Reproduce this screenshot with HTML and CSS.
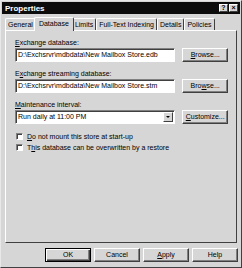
FILE: index.html
```html
<!DOCTYPE html>
<html lang="en">
<head>
  <meta charset="UTF-8">
  <title>Properties</title>
  <link rel="stylesheet" href="styles.css">
</head>
<body>
  <div class="window">
    <div class="titlebar">
      <span class="title">Properties</span>
      <span class="caption-btn">?</span>
      <span class="caption-btn">&#215;</span>
    </div>

    <div class="tabs">
      <span class="tab">General</span>
      <span class="tab active">Database</span>
      <span class="tab">Limits</span>
      <span class="tab">Full-Text Indexing</span>
      <span class="tab">Details</span>
      <span class="tab">Policies</span>
    </div>

    <div class="panel">
      <div class="field">
        <label><u>E</u>xchange database:</label>
        <div class="row">
          <div class="textbox">D:\Exchsrvr\mdbdata\New Mailbox Store.edb</div>
          <span class="btn"><u>B</u>rowse...</span>
        </div>
      </div>

      <div class="field">
        <label>E<u>x</u>change streaming database:</label>
        <div class="row">
          <div class="textbox">D:\Exchsrvr\mdbdata\New Mailbox Store.stm</div>
          <span class="btn">Bro<u>w</u>se...</span>
        </div>
      </div>

      <div class="field">
        <label><u>M</u>aintenance interval:</label>
        <div class="row">
          <div class="textbox combo">
            <span>Run daily at 11:00 PM</span>
            <span class="arrow"></span>
          </div>
          <span class="btn"><u>C</u>ustomize...</span>
        </div>
      </div>

      <div class="checks">
        <div class="check"><span class="box"></span><span><u>D</u>o not mount this store at start-up</span></div>
        <div class="check"><span class="box"></span><span>T<u>h</u>is database can be overwritten by a restore</span></div>
      </div>
    </div>

    <div class="footer">
      <span class="btn default">OK</span>
      <span class="btn">Cancel</span>
      <span class="btn"><u>A</u>pply</span>
      <span class="btn">Help</span>
    </div>
  </div>
</body>
</html>
```

FILE: styles.css
```css
body {
  margin: 0;
  font-family: "Liberation Sans", Arial, sans-serif;
  font-size: 7px;
  color: #000;
}

.window {
  width: 242px;
  height: 268px;
  box-sizing: border-box;
  background-color: #d6d6d6;
  border: 1px solid;
  border-color: #e8e8e8 #404040 #404040 #e8e8e8;
}

.titlebar {
  height: 12px;
  margin: 1px 1px 0;
  padding: 0 2px 0 3px;
  background-color: #0c0c0c;
  display: flex;
  align-items: center;
  gap: 1px;
}

.title {
  flex: 1;
  color: #fff;
  font-weight: bold;
  font-size: 8px;
}

.caption-btn {
  width: 9px;
  height: 8px;
  box-sizing: border-box;
  background-color: #d6d6d6;
  border: 1px solid;
  border-color: #fff #404040 #404040 #fff;
  font-size: 7px;
  font-weight: bold;
  line-height: 6px;
  text-align: center;
}

.tabs {
  display: flex;
  align-items: flex-end;
  height: 14px;
  margin-top: 2px;
  padding-left: 4px;
}

.tab {
  height: 11px;
  padding: 0 2px;
  line-height: 11px;
  border: 1px solid;
  border-bottom: none;
  border-color: #fff #404040 #404040 #fff;
  border-radius: 2px 2px 0 0;
  white-space: nowrap;
}

.tab.active {
  height: 13px;
  line-height: 12px;
  margin: 0 -2px -1px;
  padding: 0 4px;
  position: relative;
  background-color: #d6d6d6;
  z-index: 1;
}

.panel {
  height: 213px;
  margin: 0 4px;
  box-sizing: border-box;
  padding: 7px 8px 0 9px;
  border: 1px solid;
  border-color: #fff #404040 #404040 #fff;
}

.field {
  margin-bottom: 7px;
}

.field label {
  display: block;
  height: 9px;
  line-height: 9px;
  margin-bottom: 1px;
}

.row {
  display: flex;
  align-items: center;
  gap: 7px;
}

.textbox {
  width: 162px;
  height: 14px;
  box-sizing: border-box;
  padding: 0 2px;
  line-height: 12px;
  background-color: #fff;
  border: 1px solid;
  border-color: #808080 #fff #fff #808080;
  box-shadow: inset 1px 1px 0 #404040;
  white-space: nowrap;
  overflow: hidden;
}

.combo {
  display: flex;
  justify-content: space-between;
  align-items: center;
  padding-right: 1px;
}

.arrow {
  width: 10px;
  height: 10px;
  box-sizing: border-box;
  background-color: #d6d6d6;
  border: 1px solid;
  border-color: #fff #404040 #404040 #fff;
  position: relative;
}

.arrow::after {
  content: "";
  position: absolute;
  left: 2px;
  top: 3px;
  border-left: 2px solid transparent;
  border-right: 2px solid transparent;
  border-top: 2px solid #000;
}

.btn {
  display: inline-block;
  width: 46px;
  height: 14px;
  box-sizing: border-box;
  line-height: 12px;
  text-align: center;
  background-color: #d6d6d6;
  border: 1px solid;
  border-color: #fff #404040 #404040 #fff;
  box-shadow: inset -1px -1px 0 #808080;
}

.btn.default {
  border-color: #000;
  box-shadow: inset 1px 1px 0 #fff, inset -1px -1px 0 #404040, inset -2px -2px 0 #808080;
}

.checks {
  margin-top: 3px;
}

.check {
  display: flex;
  align-items: center;
  gap: 4px;
  height: 11px;
  margin-left: 1px;
}

.box {
  width: 7px;
  height: 7px;
  box-sizing: border-box;
  background-color: #fff;
  border: 1px solid;
  border-color: #808080 #fff #fff #808080;
  box-shadow: inset 1px 1px 0 #404040;
}

.footer {
  display: flex;
  justify-content: flex-end;
  gap: 3px;
  padding: 5px 3px 0 0;
}
```
